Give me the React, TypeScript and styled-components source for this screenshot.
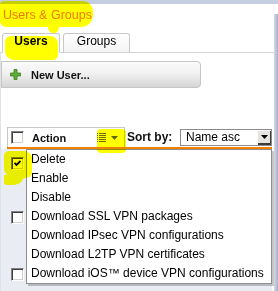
import styled, { createGlobalStyle } from 'styled-components';

const GlobalStyle = createGlobalStyle`
  html, body {
    margin: 0;
    padding: 0;
    background: #fff;
  }
  body {
    font-family: "Liberation Sans", Arial, sans-serif;
  }
`;

const Frame = styled.div`
  position: relative;
  width: 278px;
  height: 291px;
  overflow: hidden;
  background: #fff;
  display: flex;
  flex-direction: column;
`;

const TopStrip = styled.div`
  flex: none;
  height: 4px;
  background: #c4cee0;
`;

const Main = styled.div`
  flex: 1;
  display: flex;
  min-height: 0;
`;

const Panel = styled.div`
  width: 274px;
  display: flex;
  flex-direction: column;
`;

const SideStrip = styled.div`
  width: 4px;
  margin-top: 10px;
  background: linear-gradient(to right, #d3dae7, #a6b2c7);
`;

const Title = styled.h1`
  margin: 0;
  height: 22px;
  box-sizing: border-box;
  padding: 4px 0 0 3px;
  font-size: 12.5px;
  line-height: 15px;
  font-weight: normal;
  color: #f07800;
`;

const TitleRule = styled.div`
  height: 2px;
  background: #ec7d00;
`;

const TabBar = styled.div`
  display: flex;
  gap: 3px;
  margin-top: 10px;
  padding-left: 2px;
  border-bottom: 1px solid #d4d4d4;
`;

const Tab = styled.div<{ $active?: boolean; $width: number }>`
  width: ${p => p.$width}px;
  height: 20px;
  box-sizing: border-box;
  margin-bottom: -1px;
  border: 1px solid #c8c8c8;
  border-bottom-color: ${p => (p.$active ? '#fff' : '#d4d4d4')};
  border-radius: 3px 3px 0 0;
  background: ${p => (p.$active ? '#fff' : 'linear-gradient(#fff, #f3f3f3)')};
  text-align: center;
  font-size: 12px;
  line-height: 15px;
  font-weight: ${p => (p.$active ? 'bold' : 'normal')};
  color: #000;
`;

const Body = styled.div`
  flex: 1;
  display: flex;
  flex-direction: column;
  border-left: 1px solid #dde2ea;
`;

const NewUserButton = styled.div`
  margin-top: 8px;
  width: 200px;
  height: 27px;
  box-sizing: border-box;
  display: flex;
  align-items: center;
  gap: 10px;
  padding-left: 8px;
  border: 1px solid #c6c6c6;
  border-radius: 0 4px 4px 0;
  background: linear-gradient(#fbfbfb 0%, #f1f1f1 45%, #d5d5d5 100%);
  font-size: 11px;
  font-weight: bold;
  color: #111;
`;

const Toolbar = styled.div`
  margin: 39px 0 0 6px;
  width: 265px;
  height: 22px;
  box-sizing: border-box;
  display: flex;
  align-items: center;
  border-bottom: 2px solid #f08200;
`;

const ActionHead = styled.div`
  align-self: stretch;
  width: 118px;
  box-sizing: border-box;
  display: flex;
  align-items: center;
  padding: 0 6px 0 3px;
  border: 1px solid #c8c8c8;
  border-bottom: none;
  background: #fff;
`;

const HeadLabel = styled.span`
  margin-left: 8px;
  font-size: 11px;
  font-weight: bold;
  color: #111;
`;

const MenuToggle = styled.span`
  margin-left: auto;
  display: flex;
  align-items: center;
  gap: 5px;
`;

const SortLabel = styled.span`
  margin-left: 2px;
  font-size: 12px;
  font-weight: bold;
  color: #111;
`;

const Select = styled.div`
  margin-left: auto;
  width: 92px;
  height: 17px;
  box-sizing: border-box;
  display: flex;
  border: 1px solid #8c8c8c;
  background: #fff;
`;

const SelectValue = styled.span`
  flex: 1;
  padding-left: 5px;
  font-size: 12px;
  line-height: 15px;
  color: #000;
`;

const SelectArrow = styled.span`
  width: 14px;
  display: flex;
  align-items: center;
  justify-content: center;
  background: #e6e4df;
  box-shadow: inset 1px 1px #fff, inset -1px -2px #3c3c3c;
`;

const ListArea = styled.div`
  position: relative;
  flex: 1;
  width: 271px;
  background: #e9edf3;
`;

const ListRow = styled.div`
  height: 57px;
  box-sizing: border-box;
  padding: 4px 0 0 10px;
`;

const Box = styled.span`
  flex: none;
  width: 13px;
  height: 13px;
  box-sizing: border-box;
  display: inline-flex;
  align-items: center;
  justify-content: center;
  border: 1px solid;
  border-color: #808080 #fff #fff #808080;
  box-shadow: inset 1px 1px #404040, inset -1px -1px #d4d0c8;
  background: #fff;
`;

const Popup = styled.ul`
  position: absolute;
  left: 25px;
  top: 0;
  width: 246px;
  box-sizing: border-box;
  margin: 0;
  padding: 0;
  list-style: none;
  border: 1px solid #8e8e8e;
  background: #fff;
  box-shadow: 2px 2px 0 rgba(0, 0, 0, 0.22);
`;

const PopupItem = styled.li`
  height: 19px;
  padding-left: 4px;
  font-size: 12px;
  line-height: 19px;
  color: #000;
  white-space: nowrap;
`;

const Marker = styled.div<{ $x: number; $y: number; $w: number; $h: number; $r: string }>`
  position: absolute;
  left: ${p => p.$x}px;
  top: ${p => p.$y}px;
  width: ${p => p.$w}px;
  height: ${p => p.$h}px;
  border-radius: ${p => p.$r};
  background: #ffff00;
  mix-blend-mode: multiply;
  pointer-events: none;
`;

function Checkbox({ checked }: { checked?: boolean }) {
  return (
    <Box>
      {checked && (
        <svg width="7" height="7" viewBox="0 0 7 7">
          <path d="M0.5 3 L2.5 5 L6.5 1" fill="none" stroke="#000" strokeWidth="1.8" />
        </svg>
      )}
    </Box>
  );
}

const PlusIcon = () => (
  <svg width="11" height="11" viewBox="0 0 11 11">
    <path
      d="M4 0.5h3v3.5h3.5v3h-3.5v3.5h-3v-3.5h-3.5v-3h3.5z"
      fill="#5cae36"
      stroke="#3f7f22"
      strokeWidth="0.8"
    />
  </svg>
);

const ListIcon = () => (
  <svg width="9" height="10" viewBox="0 0 9 10">
    {[0, 2, 4, 6, 8].map(y => (
      <g key={y} fill="#707070">
        <rect x="0" y={y} width="1" height="1" />
        <rect x="2" y={y} width="7" height="1" />
      </g>
    ))}
  </svg>
);

const Caret = ({ color }: { color: string }) => (
  <svg width="7" height="4" viewBox="0 0 7 4">
    <path d="M0 0h7l-3.5 4z" fill={color} />
  </svg>
);

const menuItems = [
  'Delete',
  'Enable',
  'Disable',
  'Download SSL VPN packages',
  'Download IPsec VPN configurations',
  'Download L2TP VPN certificates',
  'Download iOS™ device VPN configurations',
];

function App() {
  return (
    <Frame>
      <GlobalStyle />
      <TopStrip />
      <Main>
        <Panel>
          <Title>Users &amp; Groups</Title>
          <TitleRule />
          <TabBar>
            <Tab $active $width={58}>Users</Tab>
            <Tab $width={67}>Groups</Tab>
          </TabBar>
          <Body>
            <NewUserButton>
              <PlusIcon />
              New User...
            </NewUserButton>
            <Toolbar>
              <ActionHead>
                <Checkbox />
                <HeadLabel>Action</HeadLabel>
                <MenuToggle>
                  <ListIcon />
                  <Caret color="#666" />
                </MenuToggle>
              </ActionHead>
              <SortLabel>Sort by:</SortLabel>
              <Select>
                <SelectValue>Name asc</SelectValue>
                <SelectArrow>
                  <Caret color="#000" />
                </SelectArrow>
              </Select>
            </Toolbar>
            <ListArea>
              <ListRow><Checkbox checked /></ListRow>
              <ListRow><Checkbox /></ListRow>
              <ListRow><Checkbox /></ListRow>
              <Popup>
                {menuItems.map(item => (
                  <PopupItem key={item}>{item}</PopupItem>
                ))}
              </Popup>
            </ListArea>
          </Body>
        </Panel>
        <SideStrip />
      </Main>

      <Marker $x={0} $y={1} $w={93} $h={26} $r="4px 10px 12px 6px" />
      <Marker $x={48} $y={26} $w={11} $h={7} $r="0 0 6px 6px" />
      <Marker $x={5} $y={36} $w={53} $h={24} $r="6px 8px 5px 9px" />
      <Marker $x={97} $y={129} $w={29} $h={24} $r="4px" />
      <Marker $x={4} $y={151} $w={28} $h={27} $r="5px 8px 6px 10px" />
      <Marker $x={4} $y={175} $w={20} $h={10} $r="0 0 10px 3px" />
    </Frame>
  );
}

export default App;
